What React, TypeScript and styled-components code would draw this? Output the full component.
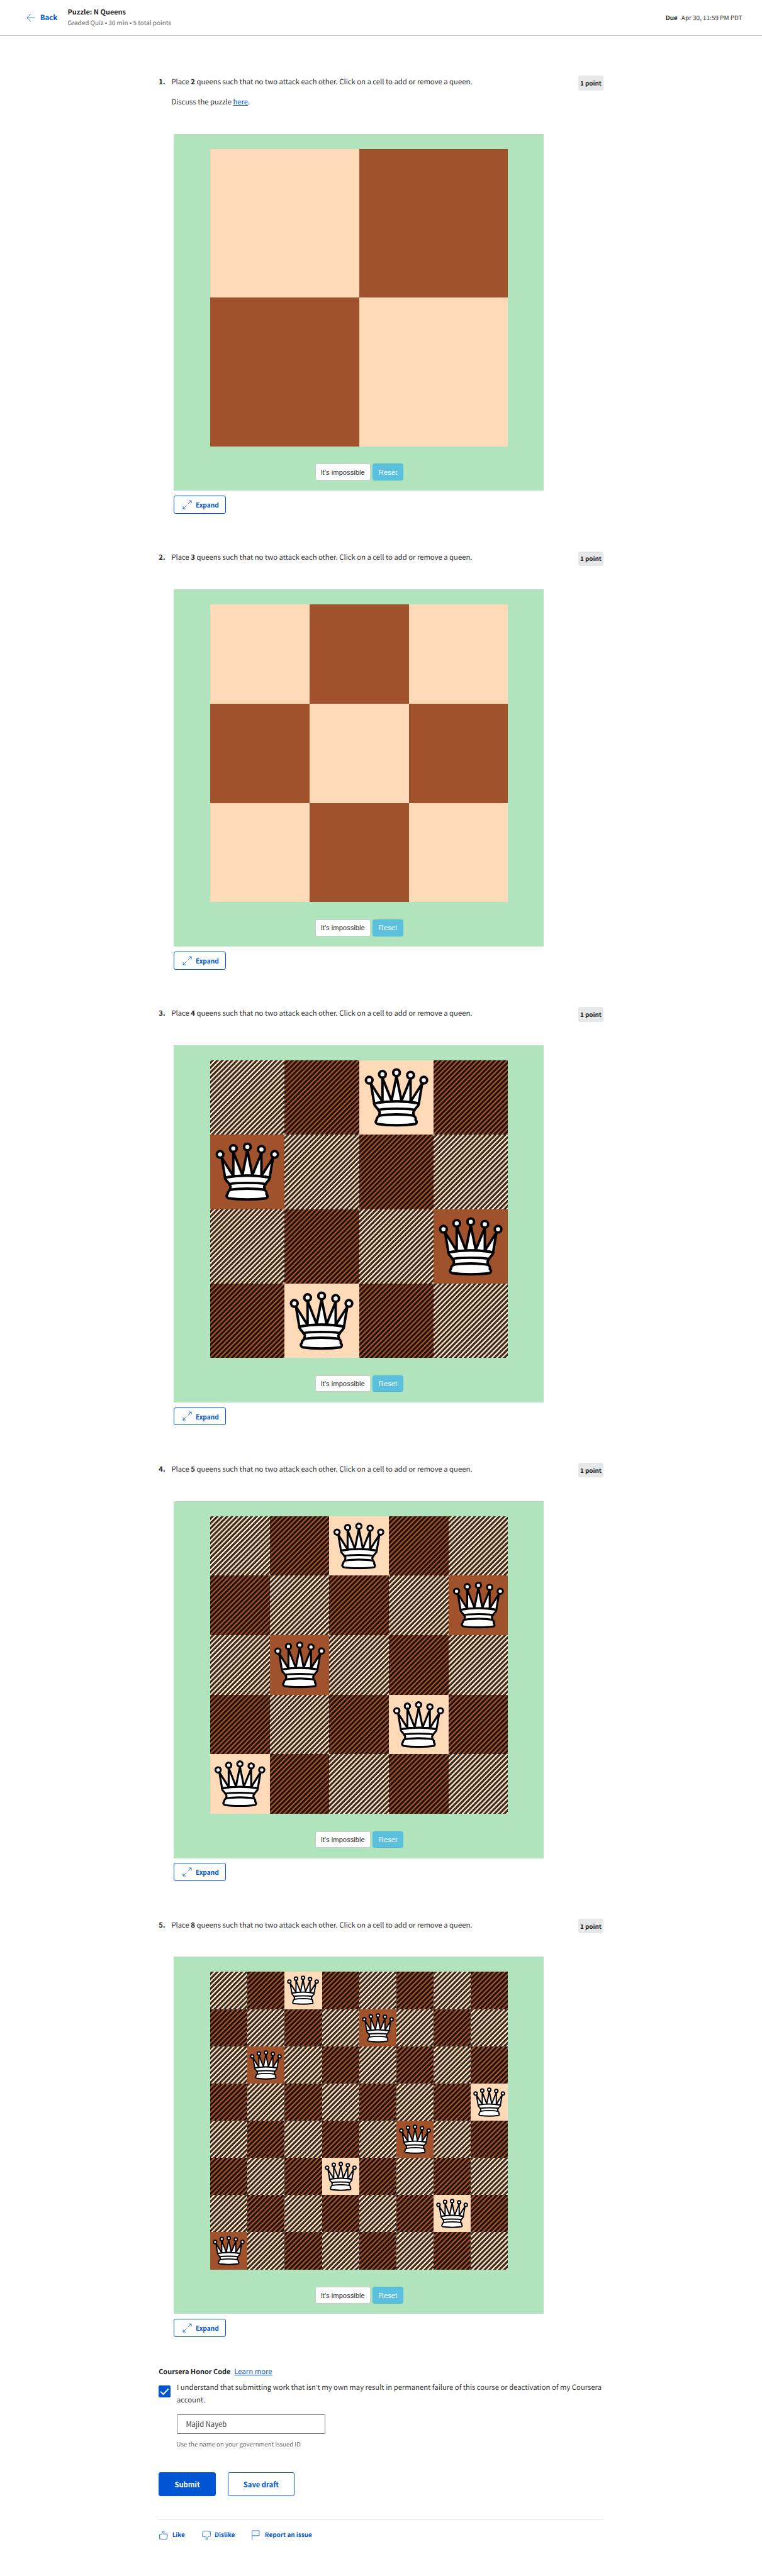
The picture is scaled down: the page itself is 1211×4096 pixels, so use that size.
import React from 'react';
import styled, { createGlobalStyle, css } from 'styled-components';

/* Design units are desktop pixels; the page is rendered at a compact scale. */
const SCALE = 0.6309;
const s = (n: number) => `${+(n * SCALE).toFixed(3)}px`;

const BLUE = '#0056d2';
const INK = '#1f1f1f';
const SANS = '"Noto Sans CJK SC", "Source Sans Pro", sans-serif';
const ARIAL = '"Liberation Sans", Arial, sans-serif';

const GlobalStyle = createGlobalStyle`
  *, *::before, *::after { box-sizing: border-box; }
  body { margin: 0; background: #fff; color: ${INK}; font-family: ${SANS}; text-rendering: geometricPrecision; }
  p { margin: 0; }
  button, input { font-family: inherit; margin: 0; padding: 0; }
  svg { display: block; flex: none; }
`;

const Page = styled.div`
  width: 100%;
  height: 4096px;
  overflow: hidden;
`;

const Header = styled.header`
  display: flex;
  align-items: center;
  height: ${s(91)};
  padding: 0 ${s(50)} 0 ${s(67)};
  border-bottom: 1px solid #c4c4c4;
`;

const BackLink = styled.a`
  display: flex;
  align-items: center;
  gap: ${s(11)};
  width: ${s(103.5)};
  color: ${BLUE};
  font-size: ${s(18.2)};
  font-weight: 700;
  line-height: ${s(26)};
`;

const HeadingGroup = styled.div`
  display: flex;
  flex-direction: column;
  flex: 1;
  padding-top: ${s(2)};
`;

const Title = styled.h1`
  margin: 0;
  font-size: ${s(17.37)};
  font-weight: 700;
  line-height: ${s(26.8)};
`;

const Meta = styled.p`
  color: #666;
  font-size: ${s(15.75)};
  line-height: ${s(26.8)};
`;

/* The CJK face draws bullets and curly quotes at full width. */
const Narrow = styled.span`
  font-family: ${ARIAL};
`;

const Due = styled.div`
  display: flex;
  gap: ${s(9.5)};
  font-size: ${s(15.75)};
  line-height: ${s(26)};
  color: #333;
  strong { color: ${INK}; }
`;

const Main = styled.main`
  width: ${s(1120)};
  margin: 0 auto;
  padding-top: ${s(100)};
`;

const Question = styled.section`
  margin-bottom: ${s(94.75)};
`;

const Prompt = styled.div<{ $tall?: boolean }>`
  display: flex;
  align-items: flex-start;
  height: ${p => s(p.$tall ? 146 : 96)};
`;

const Index = styled.div`
  width: ${s(32)};
  padding-top: ${s(1.2)};
  font-size: ${s(18)};
  font-weight: 700;
  line-height: ${s(28.8)};
`;

const PromptText = styled.div`
  display: flex;
  flex-direction: column;
  gap: ${s(21.2)};
  flex: 1;
  padding-top: ${s(1.2)};
  color: #2b2b2b;
  font-size: ${s(17.88)};
  line-height: ${s(28.8)};
  strong { color: ${INK}; }
`;

const Link = styled.a`
  color: ${BLUE};
  text-decoration: underline;
  text-underline-offset: ${s(2)};
  text-decoration-thickness: 1px;
`;

const Points = styled.div`
  display: flex;
  align-items: center;
  justify-content: center;
  width: ${s(63)};
  height: ${s(37)};
  border-radius: ${s(5)};
  background: #e5e7e8;
  font-size: ${s(15.68)};
  font-weight: 700;
`;

const Widget = styled.div`
  width: ${s(932)};
  height: ${s(900)};
  margin-left: ${s(38)};
  padding: ${s(38)} 0 0 ${s(92)};
  background: #b1e4bc;
`;

const Board = styled.div<{ $n: number }>`
  display: grid;
  grid-template-columns: repeat(${p => p.$n}, 1fr);
  grid-template-rows: repeat(${p => p.$n}, 1fr);
  width: ${s(750)};
  height: ${s(750)};
`;

const soft = 0.42;
const striped = css`
  background-image: repeating-linear-gradient(
    -45deg,
    rgba(0, 0, 0, 0.4) 0,
    transparent ${soft}px,
    transparent ${3.75 * SCALE - soft}px,
    rgba(0, 0, 0, 0.8) ${3.75 * SCALE + soft}px,
    rgba(0, 0, 0, 0.8) ${8.75 * SCALE - soft}px,
    rgba(0, 0, 0, 0.4) ${8.75 * SCALE}px
  );
`;

const Cell = styled.div<{ $dark: boolean; $attacked: boolean }>`
  background-color: ${p => (p.$dark ? '#a0522d' : '#ffdab9')};
  ${p => p.$attacked && striped}
  svg { width: 100%; height: 100%; }
`;

const Controls = styled.div`
  display: flex;
  gap: ${s(5.5)};
  margin: ${s(44)} 0 0 ${s(264)};
`;

const ControlButton = styled.button<{ $info?: boolean }>`
  width: ${p => s(p.$info ? 77 : 139.5)};
  height: ${s(42)};
  border: 1px solid ${p => (p.$info ? '#46b8da' : '#ccc')};
  border-radius: ${s(5)};
  background: ${p => (p.$info ? '#5bc0de' : '#fff')};
  color: ${p => (p.$info ? '#fff' : '#333')};
  font-family: ${ARIAL};
  font-size: ${s(17.8)};
  white-space: nowrap;
`;

const ExpandButton = styled.button`
  display: flex;
  align-items: center;
  gap: ${s(9.5)};
  width: ${s(131)};
  height: ${s(45.5)};
  margin: ${s(12.5)} 0 0 ${s(38)};
  padding-left: ${s(20)};
  border: 1px solid ${BLUE};
  border-radius: ${s(5)};
  background: #fff;
  color: ${BLUE};
  font-size: ${s(16.1)};
  font-weight: 700;
`;

const HonorTitle = styled.div`
  display: flex;
  gap: ${s(9.5)};
  margin-top: ${s(-20)};
  font-size: ${s(17.31)};
  line-height: ${s(28)};
  font-weight: 700;
`;

const HonorLink = styled(Link)`
  font-size: ${s(18)};
  font-weight: 400;
`;

const Agreement = styled.label`
  display: flex;
  gap: ${s(15.5)};
  margin-top: ${s(10)};
  color: #333;
  font-size: ${s(17.9)};
  line-height: ${s(29.8)};
`;

const CheckBox = styled.span`
  display: flex;
  align-items: center;
  justify-content: center;
  flex: none;
  width: ${s(30)};
  height: ${s(30)};
  margin-top: ${s(10)};
  border-radius: ${s(3)};
  background: ${BLUE};
`;

const AgreementText = styled.span`
  flex: 1;
  white-space: nowrap;
`;

const NameField = styled.div`
  display: flex;
  flex-direction: column;
  gap: ${s(12.5)};
  margin: ${s(21)} 0 0 ${s(45)};
  color: #666;
  font-size: ${s(15.29)};
  line-height: ${s(26)};
`;

const NameInput = styled.input`
  width: ${s(375)};
  height: ${s(49.5)};
  padding-left: ${s(22)};
  border: 1px solid #757575;
  border-radius: ${s(2)};
  background: #fff;
  color: #444;
  font-size: ${s(17.9)};
  outline: none;
`;

const Actions = styled.div`
  display: flex;
  gap: ${s(30)};
  margin-top: ${s(58)};
`;

const ActionButton = styled.button<{ $primary?: boolean }>`
  width: ${p => s(p.$primary ? 144 : 168)};
  height: ${s(60)};
  border: 1px solid ${BLUE};
  border-radius: ${s(5)};
  background: ${p => (p.$primary ? BLUE : '#fff')};
  color: ${p => (p.$primary ? '#fff' : BLUE)};
  font-size: ${s(17.75)};
  font-weight: 700;
`;

const Feedback = styled.footer`
  display: flex;
  gap: ${s(41)};
  margin-top: ${s(59.5)};
  padding-top: ${s(24)};
  border-top: 1px solid #e5e7e8;
`;

const FeedbackItem = styled.a`
  display: flex;
  align-items: center;
  gap: ${s(9)};
  color: ${BLUE};
  font-size: ${s(15.7)};
  font-weight: 700;
  line-height: ${s(28)};
`;

const line = {
  fill: 'none',
  stroke: BLUE,
  strokeWidth: 1.3,
  strokeLinejoin: 'round' as const,
};
const u = (n: number) => n * SCALE;

const ArrowLeft = () => (
  <svg width={u(23)} height={u(23)} viewBox="0 0 23 23" {...line}>
    <path d="M22 11.5H1.5M11.5 1.5L1.5 11.5L11.5 21.5" />
  </svg>
);

const ExpandIcon = () => (
  <svg width={u(24)} height={u(24)} viewBox="0 0 24 24" {...line} strokeLinejoin="miter">
    <path d="M13.5 10.5L22.3 1.7M15.8 1.7H22.3V8.2M10.5 13.5L1.7 22.3M1.7 15.8V22.3H8.2" />
  </svg>
);

const ThumbUp = () => (
  <svg width={u(25)} height={u(26)} viewBox="0 0 25 26" {...line}>
    <path d="M2.5 11.5H6.5L10.5 6.5L11 3Q11.3 1.8 12.6 2Q14.2 2.3 14 4.2L12.8 9.8H20.5Q22.8 10 22.6 12.2L21.3 20.5Q20.6 23.6 18 24H9.5Q6.8 23.8 5.5 22.2H2.5Z" />
  </svg>
);

const ThumbDown = () => (
  <svg width={u(25)} height={u(26)} viewBox="0 0 25 26" {...line}>
    <path d="M23.3 15.5H19L15 20L14.3 23.3Q13.9 25 12.5 24.7Q11.2 24.3 11.5 22.5L12.5 17H4.5Q2.3 16.8 2.5 14.5L3.6 6Q4 3 6.5 2.6H15.5Q18.3 2.8 19.7 4.4H23.3Z" />
  </svg>
);

const Flag = () => (
  <svg width={u(25)} height={u(26)} viewBox="0 0 25 26" {...line} strokeLinejoin="miter">
    <path d="M2.5 26V1.5H20.5V14H2.5" />
  </svg>
);

const Check = () => (
  <svg width={u(24)} height={u(24)} viewBox="0 0 24 24" fill="none" stroke="#fff" strokeWidth={3.2}>
    <path d="M2 12.5L8.7 19L21.5 5.5" />
  </svg>
);

const crownPoints: [number, number][] = [[6, 12], [14, 8.5], [22.5, 7.5], [31, 9], [39, 12]];

const Queen = () => (
  <svg viewBox="0 0 45 45" fill="#fff" stroke="#000" strokeWidth={1.5} strokeLinejoin="round" strokeLinecap="round">
    {crownPoints.map(([cx, cy]) => (
      <circle key={cx} cx={cx} cy={cy} r={2} />
    ))}
    <path strokeLinecap="butt" d="M9 26C17.5 24.5 30 24.5 36 26L38 14L31 25V11L25.5 24.5L22.5 9.5L19.5 24.5L14 10.5V25L7 14Z" />
    <path strokeLinecap="butt" d="M9 26C9 28 10.5 28 11.5 30C12.5 31.5 12.5 31 12 33.5C10.5 34.5 10.5 36 10.5 36C9 37.5 11 38.5 11 38.5C17.5 39.5 27.5 39.5 34 38.5C34 38.5 35.5 37.5 34 36C34 36 34.5 34.5 33 33.5C32.5 31 32.5 31.5 33.5 30C34.5 28 36 28 36 26C27.5 24.5 17.5 24.5 9 26Z" />
    <path fill="none" d="M11.5 30C15 29 30 29 33.5 30M12 33.5C18 32.5 27 32.5 33 33.5" />
  </svg>
);

/* For each board: its size and the queen's column in every row. */
const puzzles: { n: number; queens: number[] }[] = [
  { n: 2, queens: [] },
  { n: 3, queens: [] },
  { n: 4, queens: [2, 0, 3, 1] },
  { n: 5, queens: [2, 4, 1, 3, 0] },
  { n: 8, queens: [2, 4, 1, 7, 5, 3, 6, 0] },
];

const isAttacked = (queens: number[], row: number, col: number) =>
  queens[row] !== col &&
  queens.some((c, r) => r === row || c === col || Math.abs(r - row) === Math.abs(c - col));

function ChessBoard({ n, queens }: { n: number; queens: number[] }) {
  return (
    <Board $n={n}>
      {Array.from({ length: n * n }, (_, i) => {
        const row = Math.floor(i / n);
        const col = i % n;
        return (
          <Cell key={i} $dark={(row + col) % 2 === 1} $attacked={isAttacked(queens, row, col)}>
            {queens[row] === col && <Queen />}
          </Cell>
        );
      })}
    </Board>
  );
}

export default function App() {
  return (
    <Page>
      <GlobalStyle />
      <Header>
        <BackLink>
          <ArrowLeft />
          Back
        </BackLink>
        <HeadingGroup>
          <Title>Puzzle: N Queens</Title>
          <Meta>
            Graded Quiz <Narrow>•</Narrow> 30 min <Narrow>•</Narrow> 5 total points
          </Meta>
        </HeadingGroup>
        <Due>
          <strong>Due</strong>
          <span>Apr 30, 11:59 PM PDT</span>
        </Due>
      </Header>
      <Main>
        {puzzles.map(({ n, queens }, i) => (
          <Question key={n}>
            <Prompt $tall={i === 0}>
              <Index>{i + 1}.</Index>
              <PromptText>
                <p>
                  Place <strong>{n}</strong> queens such that no two attack each other. Click on a cell to add or remove a queen.
                </p>
                {i === 0 && (
                  <p>
                    Discuss the puzzle <Link>here</Link>.
                  </p>
                )}
              </PromptText>
              <Points>1 point</Points>
            </Prompt>
            <Widget>
              <ChessBoard n={n} queens={queens} />
              <Controls>
                <ControlButton>It's impossible</ControlButton>
                <ControlButton $info>Reset</ControlButton>
              </Controls>
            </Widget>
            <ExpandButton>
              <ExpandIcon />
              Expand
            </ExpandButton>
          </Question>
        ))}
        <HonorTitle>
          Coursera Honor Code
          <HonorLink>Learn more</HonorLink>
        </HonorTitle>
        <Agreement>
          <CheckBox>
            <Check />
          </CheckBox>
          <AgreementText>
            I understand that submitting work that isn<Narrow>’</Narrow>t my own may result in permanent failure of this course or deactivation of my Coursera
            <br />
            account.
          </AgreementText>
        </Agreement>
        <NameField>
          <NameInput defaultValue="Majid Nayeb" />
          Use the name on your government issued ID
        </NameField>
        <Actions>
          <ActionButton $primary>Submit</ActionButton>
          <ActionButton>Save draft</ActionButton>
        </Actions>
        <Feedback>
          <FeedbackItem>
            <ThumbUp />
            Like
          </FeedbackItem>
          <FeedbackItem>
            <ThumbDown />
            Dislike
          </FeedbackItem>
          <FeedbackItem>
            <Flag />
            Report an issue
          </FeedbackItem>
        </Feedback>
      </Main>
    </Page>
  );
}
